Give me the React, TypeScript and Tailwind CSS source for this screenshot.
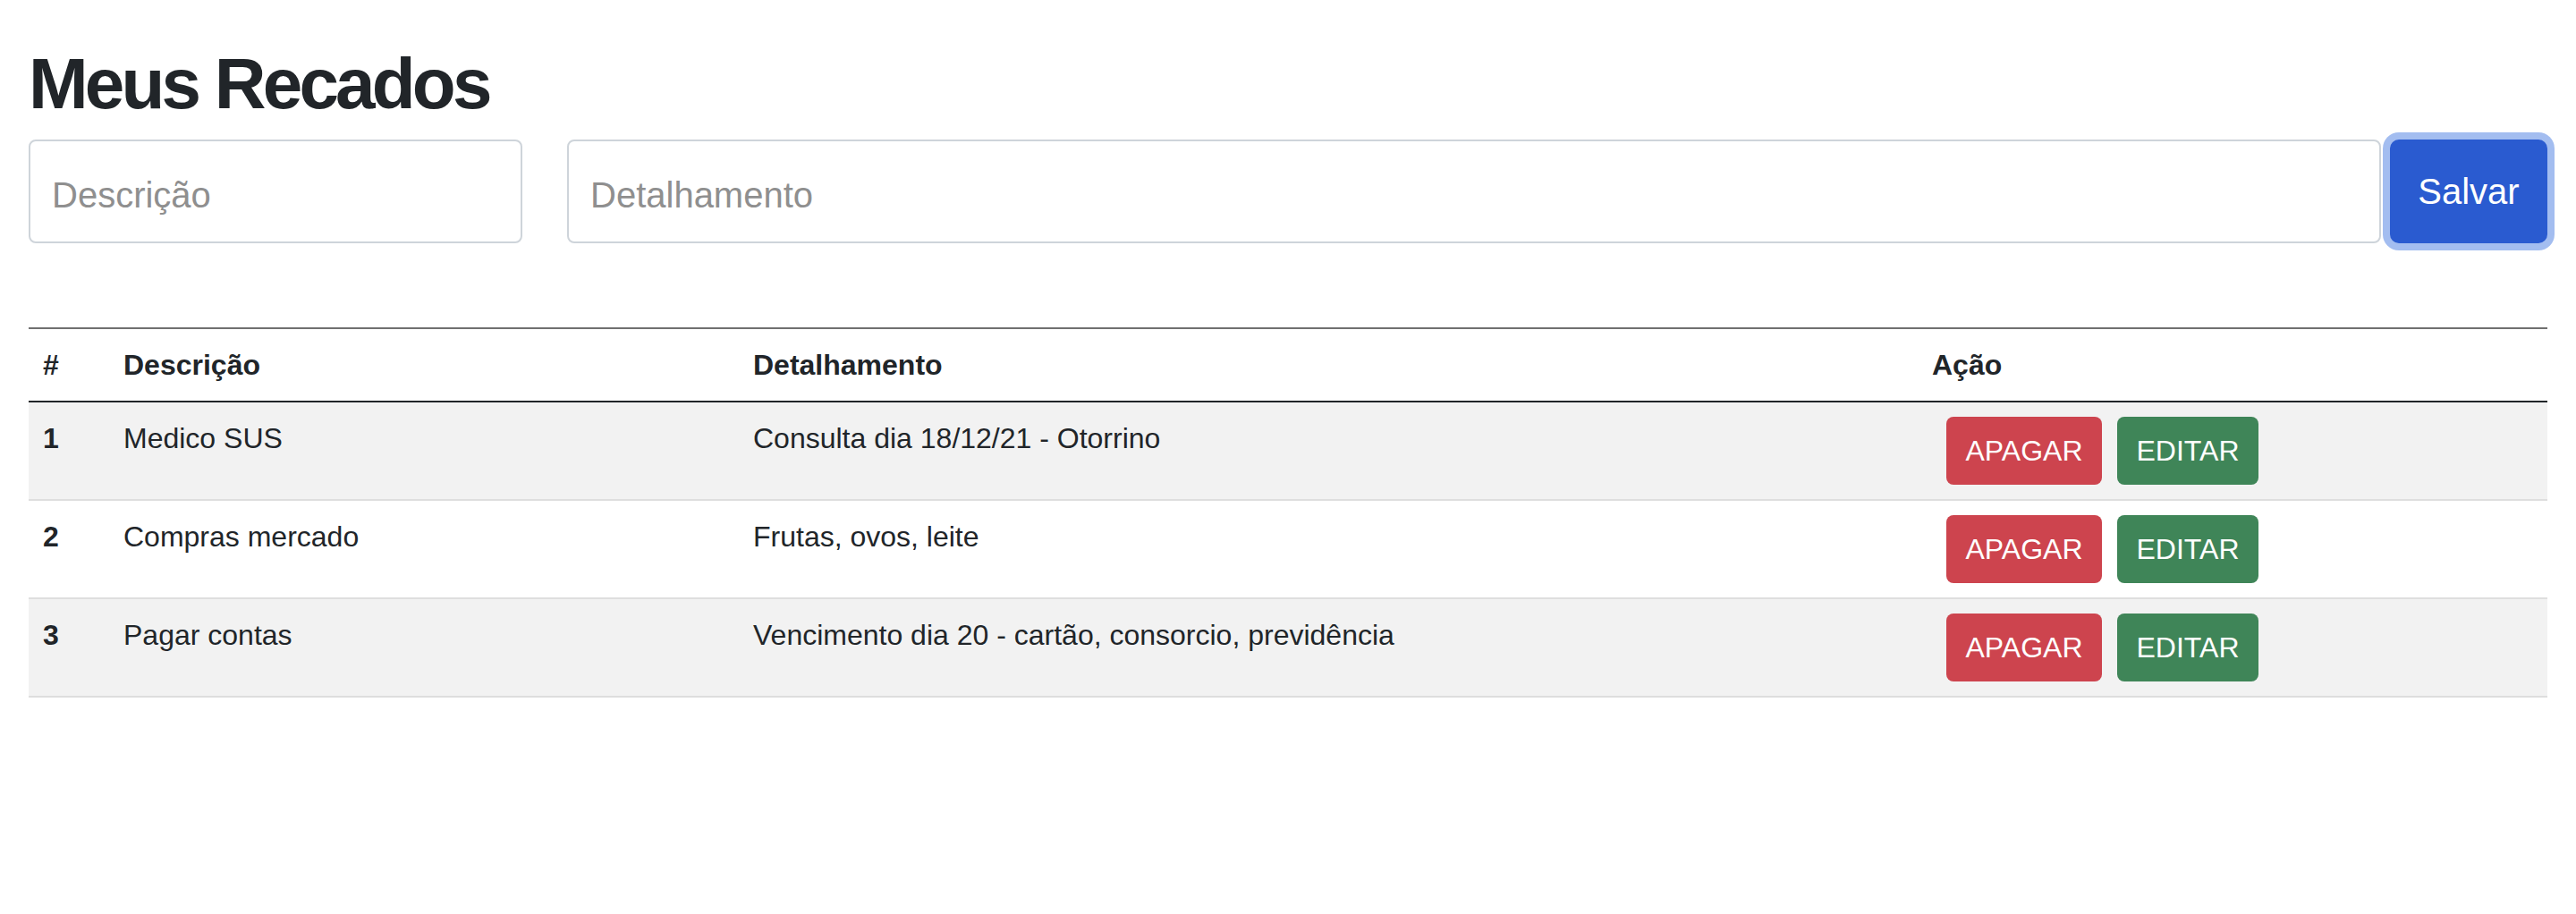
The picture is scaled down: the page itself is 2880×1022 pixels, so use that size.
import React, { useState } from 'react'

type Recado = {
  id: number
  descricao: string
  detalhamento: string
}

const recados: Recado[] = [
  { id: 1, descricao: 'Medico SUS', detalhamento: 'Consulta dia 18/12/21 - Otorrino' },
  { id: 2, descricao: 'Compras mercado', detalhamento: 'Frutas, ovos, leite' },
  { id: 3, descricao: 'Pagar contas', detalhamento: 'Vencimento dia 20 - cartão, consorcio, previdência' },
]

const App = () => {
  const [descricao, setDescricao] = useState('')
  const [detalhamento, setDetalhamento] = useState('')

  return (
    <div className="min-h-screen bg-white px-[32px] pt-[46px] font-['Liberation_Sans',Arial,sans-serif] text-[#212529]">
      <h1 className="mb-[14px] text-[80px] font-bold leading-[96px] tracking-[-3.8px]">Meus Recados</h1>

      <div className="flex items-center">
        <input
          value={descricao}
          onChange={(e) => setDescricao(e.target.value)}
          placeholder="Descrição"
          className="h-[116px] w-[552px] rounded-[8px] border-2 border-[#ced4da] bg-white px-[24px] pt-[8px] text-[40px] outline-none placeholder:text-[#8f8f8f]"
        />
        <input
          value={detalhamento}
          onChange={(e) => setDetalhamento(e.target.value)}
          placeholder="Detalhamento"
          className="ml-[50px] h-[116px] flex-1 rounded-[8px] border-2 border-[#ced4da] bg-white px-[24px] pt-[8px] text-[40px] outline-none placeholder:text-[#8f8f8f]"
        />
        <button className="ml-[10px] h-[116px] w-[176px] rounded-[10px] bg-[#2a5bd0] text-[40px] text-white ring-[8px] ring-[#a3bdf0]">
          Salvar
        </button>
      </div>

      <table className="mt-[94px] w-full table-fixed border-collapse border-t-2 border-[#707070] text-left text-[32px] leading-[48px]">
        <thead>
          <tr className="border-b-2 border-[#212529]">
            <th className="w-[90px] p-[16px] font-bold">#</th>
            <th className="w-[704px] p-[16px] font-bold">Descrição</th>
            <th className="w-[1318px] p-[16px] font-bold">Detalhamento</th>
            <th className="p-[16px] font-bold">Ação</th>
          </tr>
        </thead>
        <tbody>
          {recados.map((item, idx) => (
            <tr
              key={item.id}
              className={`border-b-2 border-[#dedede] ${idx % 2 === 0 ? 'bg-[#f2f2f2]' : 'bg-white'}`}
            >
              <th className="p-[16px] align-top font-bold">{item.id}</th>
              <td className="p-[16px] align-top">{item.descricao}</td>
              <td className="p-[16px] align-top">{item.detalhamento}</td>
              <td className="p-[16px] align-top">
                <div className="flex gap-[17px] pl-[16px]">
                  <button className="h-[76px] w-[174px] rounded-[8px] bg-[#cd444e] text-[32px] text-white">
                    APAGAR
                  </button>
                  <button className="h-[76px] w-[158px] rounded-[8px] bg-[#3f8558] text-[32px] text-white">
                    EDITAR
                  </button>
                </div>
              </td>
            </tr>
          ))}
        </tbody>
      </table>
    </div>
  )
}

export default App
